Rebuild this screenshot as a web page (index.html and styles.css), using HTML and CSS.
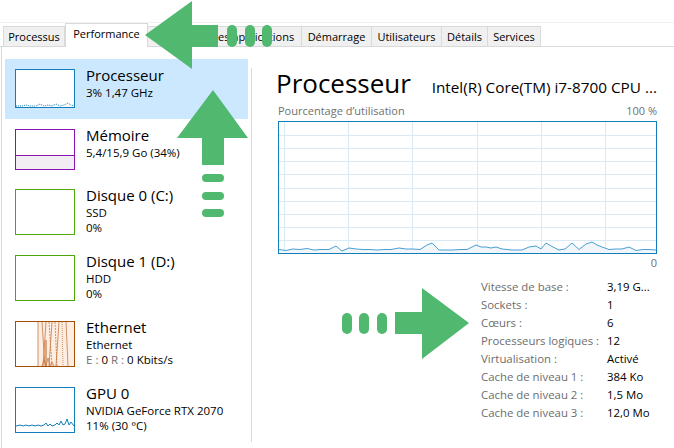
FILE: index.html
```html
<!DOCTYPE html>
<html lang="fr">
  <head>
    <meta charset="UTF-8" />
    <title>Gestionnaire des tâches - Performance</title>
    <link rel="stylesheet" href="styles.css">
  </head>
  <body>
    <div class="window">
      <div class="tabbar">
        <div class="tab w-proc">Processus</div>
        <div class="tab active w-perf">Performance</div>
        <div class="tab w-hist">Historique des applications</div>
        <div class="tab w-dem">Démarrage</div>
        <div class="tab w-util">Utilisateurs</div>
        <div class="tab w-det">Détails</div>
        <div class="tab w-serv">Services</div>
      </div>

      <div class="content">
        <aside class="sidebar">
          <div class="item selected">
            <div class="thumb cpu">
              <svg width="58" height="37" viewBox="0 0 58 37">
                <polyline fill="none" stroke="#117dbb" stroke-width="1" stroke-dasharray="1 1"
                  points="0,36 6,36 10,35 14,36 20,36 24,34 28,36 32,35 36,36 40,34 44,36 48,35 52,33 56,36 58,35" />
              </svg>
            </div>
            <div class="info">
              <div class="name">Processeur</div>
              <div class="sub">3% 1,47 GHz</div>
            </div>
          </div>

          <div class="item">
            <div class="thumb mem">
              <div class="mem-used"></div>
            </div>
            <div class="info">
              <div class="name">Mémoire</div>
              <div class="sub">5,4/15,9 Go (34%)</div>
            </div>
          </div>

          <div class="item tall">
            <div class="thumb disk"></div>
            <div class="info">
              <div class="name">Disque 0 (C:)</div>
              <div class="sub">SSD</div>
              <div class="sub">0%</div>
            </div>
          </div>

          <div class="item tall">
            <div class="thumb disk"></div>
            <div class="info">
              <div class="name">Disque 1 (D:)</div>
              <div class="sub">HDD</div>
              <div class="sub">0%</div>
            </div>
          </div>

          <div class="item tall">
            <div class="thumb eth">
              <svg width="58" height="44" viewBox="0 0 58 44">
                <polygon fill="#fdeee4" points="22,0 58,0 58,44 22,44" />
                <g stroke="#c8773f" stroke-width="0.8" fill="none">
                  <line x1="22" y1="0" x2="22" y2="44" />
                  <line x1="26" y1="0" x2="29" y2="44" />
                  <line x1="30" y1="0" x2="27" y2="44" />
                  <line x1="33" y1="0" x2="36" y2="44" stroke-dasharray="2 1" />
                  <line x1="36" y1="0" x2="33" y2="44" />
                  <line x1="39" y1="0" x2="41" y2="44" stroke-dasharray="2 1" />
                  <line x1="43" y1="0" x2="40" y2="44" />
                  <line x1="46" y1="0" x2="47" y2="44" stroke-dasharray="1 1" />
                  <line x1="50" y1="0" x2="52" y2="44" />
                  <polyline points="26,44 28,38 30,44 32,36 34,44 36,40 38,44" />
                  <line x1="30" y1="18" x2="30" y2="44" stroke-width="1.2" />
                </g>
              </svg>
            </div>
            <div class="info">
              <div class="name">Ethernet</div>
              <div class="sub">Ethernet</div>
              <div class="sub"><span class="dim">E :</span> 0 <span class="dim">R :</span> 0 Kbits/s</div>
            </div>
          </div>

          <div class="item tall">
            <div class="thumb gpu">
              <svg width="58" height="43" viewBox="0 0 58 43">
                <polyline fill="none" stroke="#117dbb" stroke-width="1"
                  points="0,38 4,37 7,38 10,37 13,38 16,37 19,38 22,37 25,38 28,37 30,35 32,38 34,36 36,38 39,37 41,35 43,37 45,33 47,37 49,36 51,31 53,37 55,34 58,38" />
              </svg>
            </div>
            <div class="info">
              <div class="name">GPU 0</div>
              <div class="sub">NVIDIA GeForce RTX 2070</div>
              <div class="sub">11% (30 °C)</div>
            </div>
          </div>
        </aside>

        <div class="divider"></div>

        <main class="detail">
          <div class="title-row">
            <h1>Processeur</h1>
            <div class="cpu-name">Intel(R) Core(TM) i7-8700 CPU ...</div>
          </div>

          <div class="graph-label">
            <span>Pourcentage d’utilisation</span>
            <span>100 %</span>
          </div>

          <div class="graph">
            <svg width="377" height="131" viewBox="0 0 377 131">
              <g stroke="#d9eaf4" stroke-width="1">
                <line x1="5.5" y1="0" x2="5.5" y2="131" />
                <line x1="69.5" y1="0" x2="69.5" y2="131" />
                <line x1="133.5" y1="0" x2="133.5" y2="131" />
                <line x1="198.5" y1="0" x2="198.5" y2="131" />
                <line x1="262.5" y1="0" x2="262.5" y2="131" />
                <line x1="326.5" y1="0" x2="326.5" y2="131" />
                <line x1="0" y1="13.5" x2="377" y2="13.5" />
                <line x1="0" y1="26.5" x2="377" y2="26.5" />
                <line x1="0" y1="39.5" x2="377" y2="39.5" />
                <line x1="0" y1="52.5" x2="377" y2="52.5" />
                <line x1="0" y1="66.5" x2="377" y2="66.5" />
                <line x1="0" y1="79.5" x2="377" y2="79.5" />
                <line x1="0" y1="92.5" x2="377" y2="92.5" />
                <line x1="0" y1="105.5" x2="377" y2="105.5" />
                <line x1="0" y1="118.5" x2="377" y2="118.5" />
              </g>
              <polygon fill="#f1f6fa"
                points="0,131 0,127.5 7,128.5 14,127 21,127.5 28,126.5 35,128 42,127.5 50,127.5 57,124 63,129 70,126 77,127 84,127.5 91,127.5 98,128 105,127.5 112,127.5 120,126 127,127 134,127 141,127.5 148,123 153,121 160,128 167,128 174,128 181,127.5 188,127.5 197,123 202,125 207,125 212,126 217,125 223,127 233,128 243,128 250,125 257,124 262,127 267,121 274,125 280,128 286,127 293,121 300,127.5 307,122 313,120 318,123 323,125 330,127.5 337,127 343,127 350,125 357,128.5 364,127.5 370,127.5 377,128 377,131" />
              <polyline fill="none" stroke="#4a9fd4" stroke-width="1"
                points="0,127.5 7,128.5 14,127 21,127.5 28,126.5 35,128 42,127.5 50,127.5 57,124 63,129 70,126 77,127 84,127.5 91,127.5 98,128 105,127.5 112,127.5 120,126 127,127 134,127 141,127.5 148,123 153,121 160,128 167,128 174,128 181,127.5 188,127.5 197,123 202,125 207,125 212,126 217,125 223,127 233,128 243,128 250,125 257,124 262,127 267,121 274,125 280,128 286,127 293,121 300,127.5 307,122 313,120 318,123 323,125 330,127.5 337,127 343,127 350,125 357,128.5 364,127.5 370,127.5 377,128" />
            </svg>
          </div>
          <div class="graph-min">0</div>

          <div class="stats">
            <span class="label">Vitesse de base :</span><span>3,19 G...</span>
            <span class="label">Sockets :</span><span>1</span>
            <span class="label">Cœurs :</span><span>6</span>
            <span class="label">Processeurs logiques :</span><span>12</span>
            <span class="label">Virtualisation :</span><span>Activé</span>
            <span class="label">Cache de niveau 1 :</span><span>384 Ko</span>
            <span class="label">Cache de niveau 2 :</span><span>1,5 Mo</span>
            <span class="label">Cache de niveau 3 :</span><span>12,0 Mo</span>
          </div>
        </main>
      </div>

      <!-- annotation arrows drawn over the screenshot -->
      <svg class="arrows" width="674" height="448" viewBox="0 0 674 448">
        <g fill="#50b86f">
          <polygon points="145,35 192,1 192,25 218,25 218,47 192,47 192,69" />
          <rect x="227" y="25" width="10" height="22" rx="5" />
          <rect x="245" y="25" width="10" height="22" rx="5" />
          <rect x="262" y="25" width="10" height="22" rx="5" />

          <polygon points="213,90 248,138 224,138 224,165 202,165 202,138 177,138" />
          <rect x="202" y="174" width="22" height="8" rx="4" />
          <rect x="202" y="192" width="22" height="8" rx="4" />
          <rect x="202" y="209" width="22" height="8" rx="4" />

          <polygon points="469,323 422,359 422,334 395,334 395,312 422,312 422,288" />
          <rect x="342" y="313" width="10" height="21" rx="5" />
          <rect x="359" y="313" width="10" height="21" rx="5" />
          <rect x="377" y="313" width="10" height="21" rx="5" />
        </g>
      </svg>
    </div>
  </body>
</html>
```

FILE: styles.css
```css
* {
  box-sizing: border-box;
}

body {
  margin: 0;
  font-family: "Open Sans", "Noto Sans", sans-serif;
  color: #000;
  background-color: #fff;
}

.window {
  position: relative;
  width: 674px;
  height: 448px;
  overflow: hidden;
}

/* tabs */
.tabbar {
  display: flex;
  align-items: flex-end;
  margin-top: 22px;
  height: 25px;
  padding-left: 3px;
  border-top: 1px solid #f2f2f2;
  border-bottom: 1px solid #d9d9d9;
}

.tab {
  flex-shrink: 0;
  height: 20px;
  margin-right: -1px;
  border: 1px solid #d9d9d9;
  border-bottom: none;
  background-color: #f0f0f0;
  font-size: 11px;
  line-height: 19px;
  text-align: center;
  white-space: nowrap;
  overflow: hidden;
}

.tab.active {
  position: relative;
  height: 24px;
  margin: 0 -1px -1px 1px;
  background-color: #fff;
}

.w-proc { width: 62px; }
.w-perf { width: 83px; }
.w-hist { width: 155px; }
.w-dem { width: 71px; }
.w-util { width: 71px; }
.w-det { width: 47px; }
.w-serv { width: 54px; }

/* main area */
.content {
  display: flex;
  height: 401px;
}

.sidebar {
  width: 251px;
  margin-left: 1px;
  padding-top: 12px;
  border-left: 1px solid #d9d9d9;
}

.divider {
  width: 1px;
  margin: 21px 0 6px;
  background-color: #d9d9d9;
}

.item {
  display: flex;
  align-items: flex-start;
  gap: 11px;
  width: 243px;
  height: 60px;
  margin-left: 3px;
  padding: 10px 0 0 10px;
}

.item.tall {
  height: 66px;
}

.item.selected {
  background-color: #cce8ff;
}

.thumb {
  flex-shrink: 0;
  width: 60px;
  height: 39px;
  border: 1px solid #117dbb;
  background-color: #fff;
}

.thumb svg {
  display: block;
}

.item.tall .thumb {
  height: 46px;
}

.thumb.mem {
  height: 41px;
  border-color: #8b12ae;
  display: flex;
  flex-direction: column;
  justify-content: flex-end;
}

.mem-used {
  height: 14px;
  border-top: 1px solid #8b12ae;
  background-color: #f1edf2;
}

.thumb.disk {
  border-color: #4da60c;
}

.thumb.eth {
  border-color: #a74f01;
}

.info {
  margin-top: -4px;
  white-space: nowrap;
}

.name {
  font-size: 15px;
  line-height: 20px;
}

.sub {
  font-size: 11.5px;
  line-height: 15px;
}

.dim {
  color: #6d6d6d;
}

/* right panel */
.detail {
  flex: 1;
  padding: 20px 17px 0 26px;
}

.title-row {
  display: flex;
  justify-content: space-between;
  align-items: baseline;
}

h1 {
  margin: 0 0 0 -2px;
  font-size: 26px;
  font-weight: normal;
  line-height: 32px;
}

.cpu-name {
  font-size: 15.3px;
  white-space: nowrap;
}

.graph-label {
  display: flex;
  justify-content: space-between;
  margin-top: 5px;
  font-size: 11px;
  line-height: 14px;
  color: #707070;
}

.graph {
  width: 379px;
  height: 133px;
  margin-top: 3px;
  border: 1px solid #117dbb;
}

.graph svg {
  display: block;
}

.graph-min {
  text-align: right;
  font-size: 11px;
  line-height: 14px;
  margin-top: 2px;
  color: #707070;
}

.stats {
  display: grid;
  grid-template-columns: 126px auto;
  margin: 8px 0 0 203px;
  font-size: 11.4px;
  line-height: 18px;
}

.stats .label {
  color: #6d6d6d;
}

.arrows {
  position: absolute;
  top: 0;
  left: 0;
  pointer-events: none;
}
```
